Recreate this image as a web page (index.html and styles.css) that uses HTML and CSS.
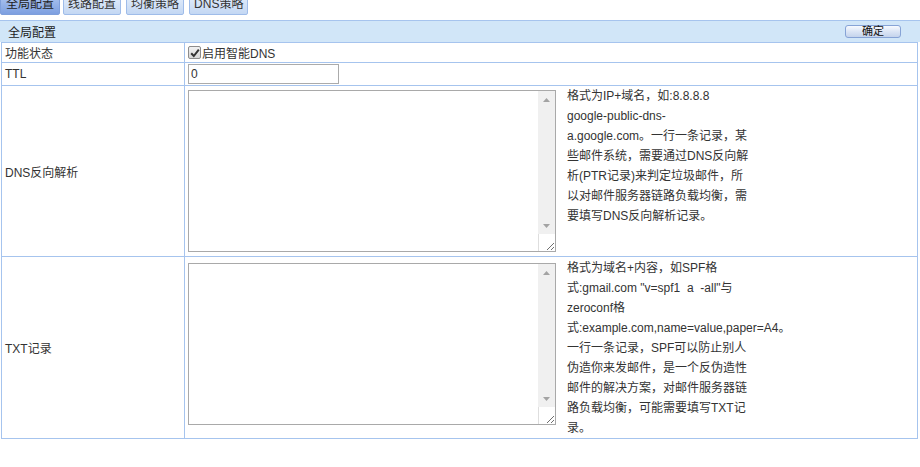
FILE: index.html
```html
<!DOCTYPE html>
<html lang="zh-CN">
<head>
<meta charset="utf-8">
<title>全局配置</title>
<link rel="stylesheet" href="styles.css">
</head>
<body>
<div class="tabs">
  <div class="tab active">全局配置</div>
  <div class="tab">线路配置</div>
  <div class="tab">均衡策略</div>
  <div class="tab">DNS策略</div>
</div>
<div class="panel-head">
  <span class="panel-title">全局配置</span>
  <button class="btn" type="button">确定</button>
</div>
<table class="form">
  <tr class="row-state">
    <td class="label">功能状态</td>
    <td class="value">
      <label class="chk-label"><span class="chk"><svg width="10" height="10" viewBox="0 0 10 10"><path d="M1.2 5.2 L3.8 8 L8.8 1.6" fill="none" stroke="#333" stroke-width="2"/></svg></span>启用智能DNS</label>
    </td>
  </tr>
  <tr class="row-ttl">
    <td class="label">TTL</td>
    <td class="value"><input class="ttl" type="text" value="0"></td>
  </tr>
  <tr class="row-big">
    <td class="label">DNS反向解析</td>
    <td class="value">
      <div class="field">
        <div class="area">
          <textarea class="area-input"></textarea>
          <div class="vscroll">
            <div class="sb-btn"><svg width="7" height="4" viewBox="0 0 7 4"><path d="M0 4L3.5 0L7 4z" fill="#a3a3a3"/></svg></div>
            <div class="sb-track"></div>
            <div class="sb-btn"><svg width="7" height="4" viewBox="0 0 7 4"><path d="M0 0L3.5 4L7 0z" fill="#a3a3a3"/></svg></div>
            <div class="sb-corner"><svg width="16" height="17" viewBox="0 0 16 17"><path d="M15 9L8 16M15 13L12 16" stroke="#6f6f6f" stroke-width="1"/></svg></div>
          </div>
        </div>
        <div class="desc">格式为IP+域名，如:8.8.8.8<br>google-public-dns-<br>a.google.com。一行一条记录，某<br>些邮件系统，需要通过DNS反向解<br>析(PTR记录)来判定垃圾邮件，所<br>以对邮件服务器链路负载均衡，需<br>要填写DNS反向解析记录。</div>
      </div>
    </td>
  </tr>
  <tr class="row-big">
    <td class="label">TXT记录</td>
    <td class="value">
      <div class="field field-txt">
        <div class="area">
          <textarea class="area-input"></textarea>
          <div class="vscroll">
            <div class="sb-btn"><svg width="7" height="4" viewBox="0 0 7 4"><path d="M0 4L3.5 0L7 4z" fill="#a3a3a3"/></svg></div>
            <div class="sb-track"></div>
            <div class="sb-btn"><svg width="7" height="4" viewBox="0 0 7 4"><path d="M0 0L3.5 4L7 0z" fill="#a3a3a3"/></svg></div>
            <div class="sb-corner"><svg width="16" height="17" viewBox="0 0 16 17"><path d="M15 9L8 16M15 13L12 16" stroke="#6f6f6f" stroke-width="1"/></svg></div>
          </div>
        </div>
        <div class="desc">格式为域名+内容，如SPF格<br>式:gmail.com "v=spf1&nbsp; a&nbsp; -all"与<br>zeroconf格<br>式:example.com,name=value,paper=A4。<br>一行一条记录，SPF可以防止别人<br>伪造你来发邮件，是一个反伪造性<br>邮件的解决方案，对邮件服务器链<br>路负载均衡，可能需要填写TXT记<br>录。</div>
      </div>
    </td>
  </tr>
</table>
</body>
</html>
```

FILE: styles.css
```css
html, body {
  margin: 0;
  padding: 0;
  background: #fff;
  overflow: hidden;
}
body {
  font-family: "Liberation Sans", "Noto Sans CJK SC", sans-serif;
  font-size: 12px;
  color: #333;
}

.tabs {
  display: flex;
  margin-top: -6px;
  height: 21px;
}
.tab {
  height: 19px;
  line-height: 19px;
  padding: 0 4px;
  margin-left: 5px;
  border: 1px solid #9fbce9;
  border-radius: 0 0 2px 2px;
  background: linear-gradient(#e4eefb, #c3d7f3);
  color: #333;
  white-space: nowrap;
}
.tab.active {
  margin-left: 0;
  margin-right: -2px;
  padding: 0 5px;
  border-color: #7f9fdb;
  background: linear-gradient(#aec6f0, #7d9fe0);
  color: #222;
}

.panel-head {
  margin-top: 5px;
  border-top: 1px solid #a6c4ee;
  background: #d1e6f8;
  height: 21px;
  display: flex;
  align-items: center;
  justify-content: space-between;
  padding: 0 19px 0 8px;
}
.panel-title {
  color: #222;
}
.btn {
  flex: none;
  box-sizing: border-box;
  width: 56px;
  height: 13px;
  padding: 0;
  font-family: "Liberation Sans", "Noto Sans CJK SC", sans-serif;
  font-size: 11px;
  line-height: 11px;
  color: #111;
  border: 1px solid #86a3d6;
  border-radius: 3px;
  background: linear-gradient(#f7faff, #dbe5f5 50%, #c4d3ec);
}

.form {
  border-collapse: collapse;
  margin-left: 1px;
  width: 917px;
}
.form td {
  border: 1px solid #a6c4ee;
  padding: 0;
}
.form td.label {
  width: 176px;
  padding: 0 3px;
  color: #333;
}
.form td.value {
  padding-left: 3px;
}
.row-state td {
  height: 19px;
}
.row-ttl td {
  height: 22px;
}

.chk-label {
  display: flex;
  align-items: center;
  gap: 1px;
}
.chk {
  width: 11px;
  height: 11px;
  border: 1px solid #8c8c8c;
  border-radius: 2px;
  background: linear-gradient(#f2f2f2, #d6d6d6);
  display: flex;
  align-items: center;
  justify-content: center;
}

.ttl {
  display: block;
  width: 147px;
  height: 18px;
  margin: 0;
  box-sizing: content-box;
  padding: 0 0 0 2px;
  border: 1px solid #ababab;
  font-family: "Liberation Sans", sans-serif;
  font-size: 12px;
  color: #333;
  outline: none;
}

.field {
  display: flex;
  align-items: flex-start;
}
.area {
  display: flex;
  box-sizing: border-box;
  width: 368px;
  height: 162px;
  margin: 4px 0;
  border: 1px solid #a9a9a9;
  background: #fff;
}
.field-txt .area {
  margin-top: 6px;
}
.area-input {
  flex: 1;
  min-width: 0;
  margin: 0;
  padding: 2px;
  border: none;
  outline: none;
  resize: none;
  overflow: hidden;
  background: #fff;
}
.vscroll {
  width: 17px;
  display: flex;
  flex-direction: column;
  background: #f0f0f0;
}
.sb-btn {
  height: 17px;
  display: flex;
  align-items: center;
  justify-content: center;
}
.sb-track {
  flex: 1;
}
.sb-corner {
  height: 17px;
  background: #fff;
  border-left: 1px solid #dedede;
  display: flex;
  align-items: flex-end;
  justify-content: flex-end;
}
.sb-corner svg {
  display: block;
}

.desc {
  margin-left: 11px;
  line-height: 20px;
  white-space: nowrap;
  color: #333;
}
.field-txt .desc {
  padding-top: 1px;
}
```
